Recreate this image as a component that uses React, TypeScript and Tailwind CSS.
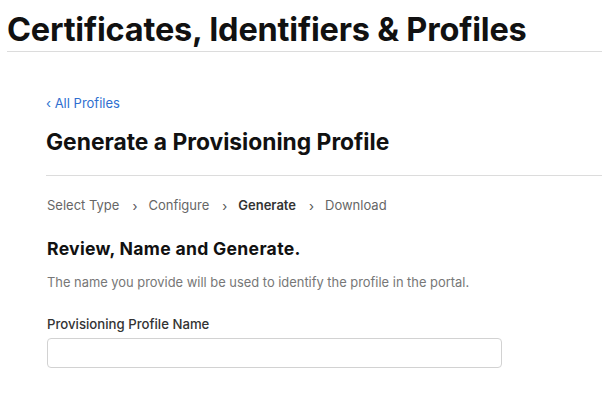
import React from "react";

export default function App() {
  return (
    <div className="w-[602px] h-[394px] bg-white overflow-hidden" style={{ fontFamily: "Inter, 'Noto Sans', sans-serif" }}>
      <div className="pl-[7px] pt-[10px]">
        <h1 className="text-[32.5px] leading-[40px] font-bold text-[#111] tracking-[-0.2px]">Certificates, Identifiers &amp; Profiles</h1>
        <div className="mt-[1px] h-px bg-[#dcdcdc]" />
      </div>
      <div className="pl-[46px] pt-[43px]">
        <a className="block text-[13px] leading-[16px] text-[#2f6fd0]">‹ All Profiles</a>
        <h2 className="mt-[17px] text-[22.8px] leading-[28px] font-bold text-[#111]">Generate a Provisioning Profile</h2>
        <div className="mt-[19px] h-px bg-[#dcdcdc]" />
        <div className="mt-[21px] pl-px flex items-center text-[13px] leading-[16px] text-[#666]">
          <span>Select Type</span>
          <span className="ml-[13px] mr-[11px] text-[#555] translate-y-[1px]">›</span>
          <span>Configure</span>
          <span className="ml-[13px] mr-[11px] text-[#555] translate-y-[1px]">›</span>
          <span className="font-semibold text-[#333]">Generate</span>
          <span className="ml-[13px] mr-[11px] text-[#555] translate-y-[1px]">›</span>
          <span>Download</span>
        </div>
        <h3 className="mt-[24px] pl-px text-[17.6px] leading-[24px] font-bold text-[#111] tracking-[0.3px]">Review, Name and Generate.</h3>
        <p className="mt-[14px] pl-px text-[12.9px] leading-[16px] text-[#777]">The name you provide will be used to identify the profile in the portal.</p>
        <label className="block mt-[25px] pl-px text-[13.2px] leading-[16px] font-medium text-[#333]">Provisioning Profile Name</label>
        <input className="block mt-[6px] ml-px w-[455px] h-[30px] border border-[#d2d2d2] rounded-[4px] outline-none" />
      </div>
    </div>
  );
}
